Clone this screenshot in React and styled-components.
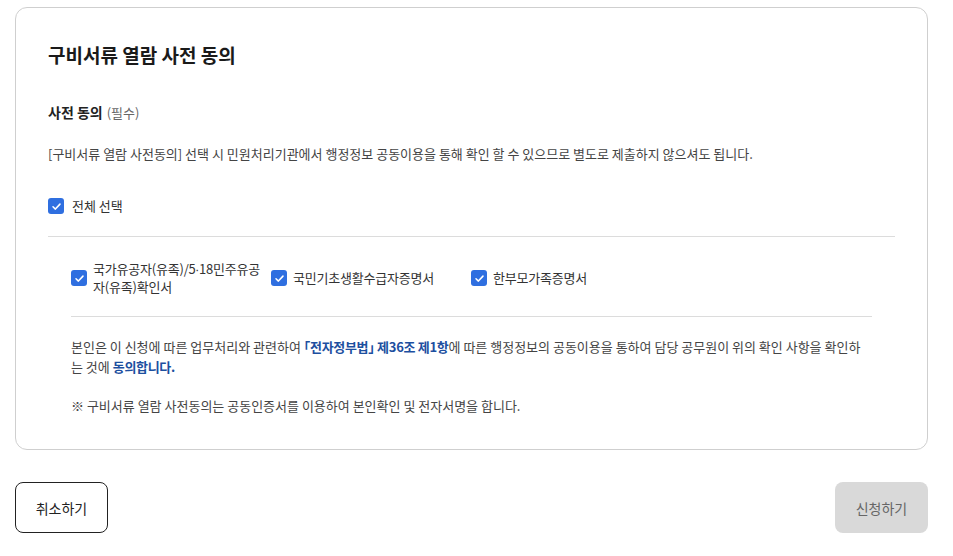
import React from "react";
import styled, { createGlobalStyle } from "styled-components";

const Global = createGlobalStyle`
  html, body { margin: 0; padding: 0; background: #fff; }
  body {
    font-family: "Noto Sans CJK KR", "Noto Sans", sans-serif;
    color: #222;
    -webkit-font-smoothing: antialiased;
  }
`;

const Page = styled.div`
  padding: 7px 25px 20px 15px;
  width: 913px;
`;

const Card = styled.section`
  border: 1px solid #cfcfcf;
  border-radius: 12px;
  padding: 33px 32px 33px;
`;

const Title = styled.h2`
  margin: 0;
  font-size: 19px;
  line-height: 28px;
  font-weight: 700;
  color: #1a1a1a;
`;

const Label = styled.div`
  margin-top: 33px;
  font-size: 14px;
  line-height: 20px;
  font-weight: 700;
  color: #222;
`;

const Required = styled.span`
  font-size: 13px;
  font-weight: 400;
  color: #666;
  margin-left: 4px;
`;

const Desc = styled.p`
  margin: 21px 0 0;
  font-size: 13px;
  line-height: 20px;
  color: #444;
`;

const CheckRow = styled.label`
  display: flex;
  align-items: center;
  gap: 8px;
  margin-top: ${(p) => p.$mt || 0}px;
  font-size: 13px;
  line-height: 18px;
  color: #333;
`;

const Box = styled.span`
  flex: none;
  width: 16px;
  height: 16px;
  border-radius: 3px;
  background: #2f6fe0;
  display: inline-flex;
  align-items: center;
  justify-content: center;
`;

const Divider = styled.hr`
  border: 0;
  border-top: 1px solid #dcdcdc;
  margin: ${(p) => p.$mt}px 0 0;
`;

const Inner = styled.div`
  padding: 0 23px;
`;

const Items = styled.div`
  display: grid;
  grid-template-columns: repeat(3, 200px);
  margin-top: 23px;
`;

const Item = styled.label`
  display: flex;
  align-items: center;
  gap: 6px;
  padding-right: 8px;
  font-size: 13px;
  line-height: 18px;
  letter-spacing: -0.2px;
  color: #333;
`;

const Body = styled.p`
  margin: ${(p) => p.$mt}px 0 0;
  font-size: 13px;
  line-height: 20px;
  color: #444;
`;

const Strong = styled.strong`
  color: #1d4f9f;
  font-weight: 700;
  letter-spacing: -0.3px;
  font-feature-settings: "halt";
`;

const Actions = styled.div`
  display: flex;
  justify-content: space-between;
  margin-top: 32px;
`;

const Button = styled.button`
  width: 93px;
  height: 51px;
  border-radius: 8px;
  font-family: inherit;
  font-size: 14px;
  border: ${(p) => (p.$primary ? "0" : "1px solid #222")};
  background: ${(p) => (p.$primary ? "#d9d9d9" : "#fff")};
  color: ${(p) => (p.$primary ? "#666" : "#222")};
`;

const Check = () => (
  <Box>
    <svg width="11" height="11" viewBox="0 0 12 12" fill="none">
      <path d="M2.2 6.3 4.8 8.8 9.8 3.4" stroke="#fff" strokeWidth="1.7" strokeLinecap="round" strokeLinejoin="round" />
    </svg>
  </Box>
);

export default function App() {
  return (
    <>
      <Global />
      <Page>
        <Card>
          <Title>구비서류 열람 사전 동의</Title>
          <Label>
            사전 동의<Required>(필수)</Required>
          </Label>
          <Desc>
            [구비서류 열람 사전동의] 선택 시 민원처리기관에서 행정정보 공동이용을 통해 확인 할 수 있으므로 별도로 제출하지 않으셔도 됩니다.
          </Desc>
          <CheckRow $mt={33}>
            <Check />
            전체 선택
          </CheckRow>
          <Divider $mt={21} />
          <Inner>
            <Items>
              <Item>
                <Check />
                국가유공자(유족)/5∙18민주유공자(유족)확인서
              </Item>
              <Item>
                <Check />
                국민기초생활수급자증명서
              </Item>
              <Item>
                <Check />
                한부모가족증명서
              </Item>
            </Items>
            <Divider $mt={20} />
            <Body $mt={20}>
              본인은 이 신청에 따른 업무처리와 관련하여 <Strong>「전자정부법」 제36조 제1항</Strong>에 따른 행정정보의 공동이용을 통하여 담당 공무원이 위의 확인 사항을 확인하는 것에 <Strong>동의합니다.</Strong>
            </Body>
            <Body $mt={19}>※ 구비서류 열람 사전동의는 공동인증서를 이용하여 본인확인 및 전자서명을 합니다.</Body>
          </Inner>
        </Card>
        <Actions>
          <Button>취소하기</Button>
          <Button $primary>신청하기</Button>
        </Actions>
      </Page>
    </>
  );
}
